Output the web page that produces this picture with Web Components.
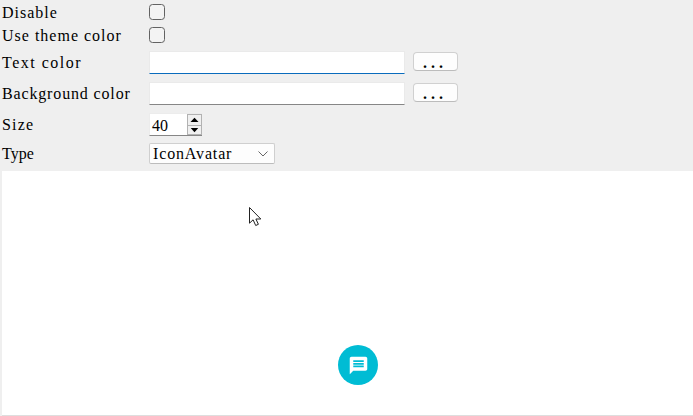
<!DOCTYPE html>
<html lang="en"><head><meta charset="utf-8"><title>Avatar</title>
<style>html,body{margin:0;height:100%;overflow:hidden;background:#efefef}</style></head>
<body><avatar-demo></avatar-demo>
<script>
const define=(name,html)=>customElements.define(name,class extends HTMLElement{
  constructor(){super();this.attachShadow({mode:'open'}).innerHTML='<style>*{box-sizing:border-box}</style>'+html;}
});
define('form-row',`<style>
:host{display:grid;grid-template-columns:147px 1fr;padding-left:2px;height:var(--h,31px);box-sizing:border-box}
.label{padding-top:var(--t,8px);line-height:16px;white-space:pre;letter-spacing:var(--ls,1px)}
.field{display:flex;align-items:flex-start;padding-top:var(--f,4px);gap:8px}
</style><div class="label"><slot name="label"></slot></div><div class="field"><slot></slot></div>`);
define('check-box',`<style>:host{display:block;box-sizing:border-box;width:16px;height:16px;border:1px solid #626262;border-radius:3.5px;background:#f3f3f3}</style>`);
define('line-edit',`<style>
:host{display:block;box-sizing:border-box;width:256px;height:23px;background:#fff;border:1px solid #eaeaea;border-bottom:1px solid #868686}
:host([focused]){border-color:#eaeaea #eaeaea #0a6cbd}
</style>`);
define('push-button',`<style>
:host{display:block;box-sizing:border-box;width:45px;height:19px;margin-top:1px;background:#fdfdfd;border:1px solid #d0d0d0;border-bottom-color:#bcbcbc;border-radius:4px;padding-left:9px;line-height:19px;font-weight:bold;letter-spacing:4px}
</style><slot></slot>`);
define('spin-box',`<style>
:host{display:flex;box-sizing:border-box;width:53px;height:23px;background:#fff;border:1px solid #ececec;border-right:0;border-bottom:1px solid #868686;line-height:23px;justify-content:space-between;padding-left:2px}
.b{width:15px;height:21px;border:1px solid #b2b2b2;background:#f0f0f0;display:grid;grid-template-rows:1fr 1fr}
.b svg{display:block;width:13px;height:9.5px}.b svg+svg{border-top:1px solid #b2b2b2}
</style><slot></slot><div class="b"><svg viewBox="0 0 13 9"><path d="M2.500 6.800h8L6.500 2.500z"/></svg><svg viewBox="0 0 13 9"><path d="M2.500 2.200h8L6.500 6.500z"/></svg></div>`);
define('combo-box',`<style>
:host{display:flex;align-items:center;justify-content:space-between;box-sizing:border-box;width:126px;height:21px;background:#fdfdfd;border:1px solid #cfcfcf;border-bottom-color:#bcbcbc;border-radius:2px;padding:1px 5px 0 3px;letter-spacing:.85px}
svg{width:12px;height:8px;margin-top:-1px}
</style><slot></slot><svg viewBox="0 0 12 8"><path d="M1.500 1.500L6 6l4.500-4.500" fill="none" stroke="#666"/></svg>`);
define('icon-avatar',`<style>
:host{display:grid;place-items:center;width:40px;height:40px;border-radius:50%;background:#00bcd4}svg{width:21px;height:21px}
</style><svg viewBox="0 0 24 24"><path fill="#fff" fill-rule="evenodd" d="M4 2h16c1.100 0 2 .9 2 2v12c0 1.100-.9 2-2 2H6l-4 4V4c0-1.100.9-2 2-2zm2 10v2h12v-2zm0-3v2h12V9zm0-3v2h12V6z"/></svg>`);
define('mouse-pointer',`<style>:host{position:absolute;left:247px;top:35px}svg{display:block}</style>
<svg width="13" height="21" viewBox="0 0 13 21"><path d="M.5 1.500v15.700l3.600-3.400 2.600 5.700 2.700-1.200-2.500-5.300h4.900z" fill="#fff" stroke="#222" stroke-width="1"/></svg>`);
define('preview-pane',`<style>
:host{display:flex;position:relative;align-items:flex-end;box-sizing:border-box;flex:1;margin:3px 0 0 2px;background:#fff;border-bottom:1px solid #dedede;padding:0 0 29.5px 336px}
</style><slot></slot>`);
define('avatar-demo',`<style>
:host{display:flex;flex-direction:column;height:415.5px;background:#efefef;color:#000;font:16px "Liberation Serif",serif}
</style>
<form-row style="--h:24px;--t:5px;--ls:1px"><span slot="label">Disable</span><check-box></check-box></form-row>
<form-row style="--h:23px;--t:4px;--f:3px;--ls:1px"><span slot="label">Use theme color</span><check-box></check-box></form-row>
<form-row style="--ls:1.5px"><span slot="label">Text color</span><line-edit focused></line-edit><push-button>...</push-button></form-row>
<form-row style="--ls:.85px"><span slot="label">Background color</span><line-edit></line-edit><push-button>...</push-button></form-row>
<form-row style="--ls:1.2px"><span slot="label">Size</span><spin-box>40</spin-box></form-row>
<form-row style="--h:28px;--t:6px;--f:3px;--ls:0px"><span slot="label">Type</span><combo-box>IconAvatar</combo-box></form-row>
<preview-pane><icon-avatar></icon-avatar><mouse-pointer></mouse-pointer></preview-pane>`);
</script></body></html>
